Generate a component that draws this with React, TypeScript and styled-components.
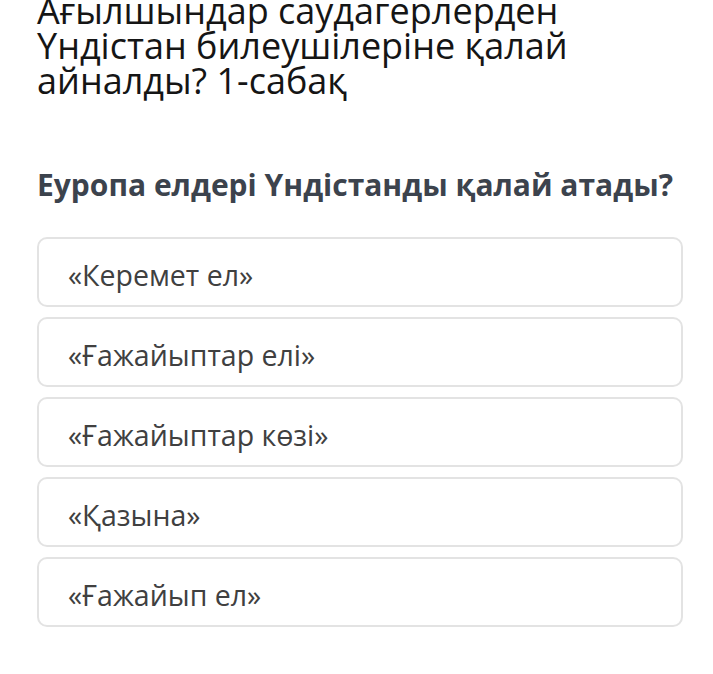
import styled, { createGlobalStyle } from "styled-components";

const GlobalStyle = createGlobalStyle`
  html, body {
    margin: 0;
    padding: 0;
    background: #ffffff;
    overflow: hidden;
  }
`;

const Page = styled.main`
  width: 713px;
  height: 674px;
  box-sizing: border-box;
  padding: 0 30px 0 37px;
  font-family: "Open Sans", "Noto Sans", sans-serif;
  display: flex;
  flex-direction: column;
`;

const LessonTitle = styled.h1`
  margin: -7px 0 0 0;
  font-size: 36px;
  line-height: 35px;
  font-weight: 400;
  color: #151515;
`;

const Question = styled.h2`
  margin: 67px 0 32px 0;
  font-size: 30px;
  line-height: 40px;
  font-weight: 700;
  color: #3c434d;
  white-space: nowrap;
`;

const Options = styled.div`
  display: flex;
  flex-direction: column;
  gap: 10px;
`;

const Option = styled.button`
  height: 70px;
  box-sizing: border-box;
  display: flex;
  align-items: center;
  padding: 6px 0 0 29px;
  background: #ffffff;
  border: 2px solid #e3e3e3;
  border-radius: 10px;
  font-family: inherit;
  font-size: 28.5px;
  color: #404040;
  text-align: left;
  cursor: pointer;
`;

const answers = [
  "«Керемет ел»",
  "«Ғажайыптар елі»",
  "«Ғажайыптар көзі»",
  "«Қазына»",
  "«Ғажайып ел»",
];

export default function App() {
  return (
    <>
      <GlobalStyle />
      <Page>
        <LessonTitle>
          Ағылшындар саудагерлерден
          <br />
          Үндістан билеушілеріне қалай
          <br />
          айналды? 1-сабақ
        </LessonTitle>
        <Question>Еуропа елдері Үндістанды қалай атады?</Question>
        <Options>
          {answers.map((a) => (
            <Option key={a}>{a}</Option>
          ))}
        </Options>
      </Page>
    </>
  );
}
